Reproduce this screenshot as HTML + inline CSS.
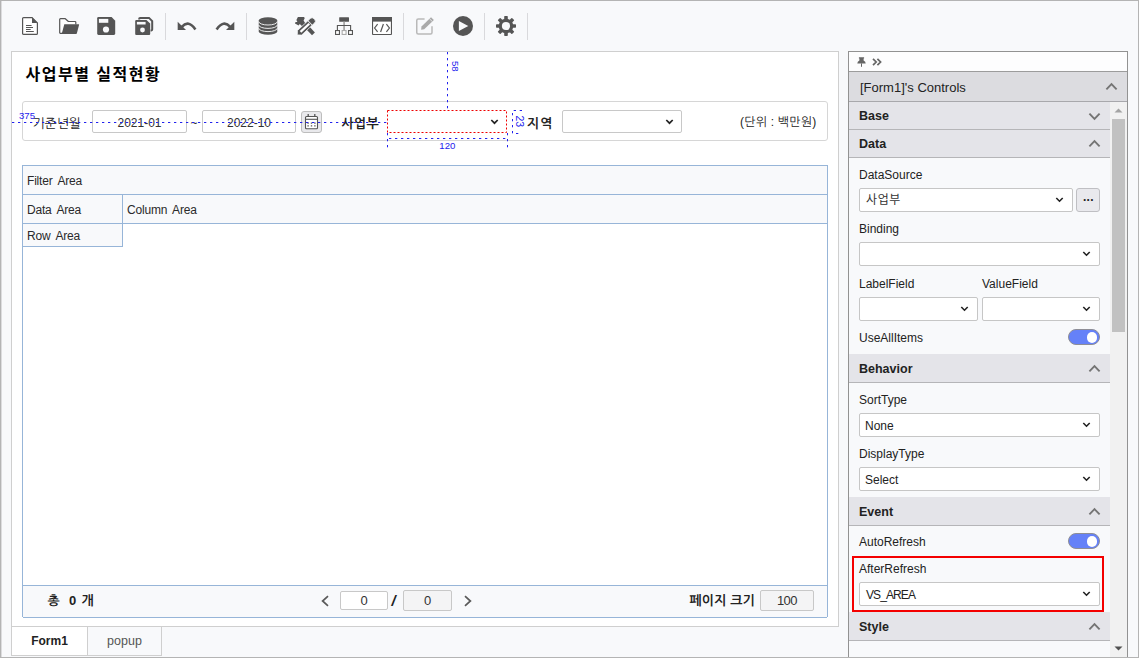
<!DOCTYPE html>
<html lang="ko">
<head>
<meta charset="utf-8">
<title>Form Designer</title>
<style>
*{box-sizing:border-box;margin:0;padding:0}
html,body{width:1139px;height:658px;overflow:hidden;background:#f8f9fb}
body{position:relative;font-family:"Liberation Sans","NanumGothic",sans-serif;font-size:12px;color:#222}
.abs{position:absolute}
#frame{position:absolute;left:0;top:0;width:1139px;height:658px;border:1px solid #b4b4b4;box-shadow:inset 1px 0 0 #dcdcde;pointer-events:none;z-index:50}
/* toolbar */
.tsep{position:absolute;top:13px;width:1px;height:27px;background:#d9d9dc}
.ico{position:absolute}
/* main panel */
#main{position:absolute;left:11px;top:51px;width:828px;height:576px;background:#fff;border:1px solid #cfcfcf}
#title{position:absolute;left:25.500px;top:62.500px;font-family:"Liberation Sans","Noto Sans CJK KR",sans-serif;font-weight:bold;font-size:16px;line-height:24px;color:#000;letter-spacing:1.500px;white-space:nowrap}
#fbox{position:absolute;left:22px;top:101px;width:806px;height:40px;border:1px solid #d6d6d6;border-radius:3px;background:#fff}
.klabel{position:absolute;font-weight:bold;font-size:13px;line-height:15px;color:#222;white-space:nowrap;font-family:"Liberation Sans","NanumGothic",sans-serif}
.inp{position:absolute;height:23px;border:1px solid #c8c8c8;border-radius:2px;background:#fff;text-align:center;font-size:12px;line-height:24px;color:#333}
.chev{position:absolute}
.blue{color:#2a2ae8;font-size:9px;position:absolute;white-space:nowrap;font-family:"Liberation Sans",sans-serif}
/* grid */
#grid{position:absolute;left:22px;top:165px;width:806px;height:452px;border:1px solid #97b5d8;background:#fff}
.gtxt{position:absolute;font-size:12px;color:#2a2a2a;white-space:nowrap;line-height:14px;letter-spacing:-0.200px;word-spacing:2.500px}
.garea{position:absolute;background:#f8f9fb;font-size:12px;color:#222;white-space:nowrap;font-family:"DejaVu Sans","Liberation Sans",sans-serif}
/* tabs */
.tab{position:absolute;top:626px;height:30px;border:1px solid #cfcfcf;font-size:12px;line-height:29px;text-align:center;white-space:nowrap}
/* right panel */
#rp{position:absolute;left:848px;top:51px;width:280px;height:607px;border:1px solid #929292;border-bottom:none;background:#f8f9fb}
.hdr{position:absolute;left:849px;background:#e4e4e9;border-bottom:1px solid #b5b5b8;font-size:13px;white-space:nowrap;color:#222}
.sec{font-weight:bold;font-size:12.500px}
.plabel{position:absolute;left:859px;font-size:12px;color:#222;white-space:nowrap}
.sel{position:absolute;height:24px;border:1px solid #c6c6c6;border-radius:2px;background:#fff;font-size:12px;line-height:24px;padding-left:5px;color:#222;white-space:nowrap;overflow:hidden}
.tog{position:absolute;left:1068px;width:32px;height:16px;border-radius:8px;background:#6581f8;border:1px solid #8e8e96}
.tog i{position:absolute;right:2px;top:2px;width:10.500px;height:10.500px;border-radius:6px;background:#fff}
</style>
</head>
<body>
<div id="frame"></div>

<!-- toolbar separators -->
<div class="tsep" style="left:165px"></div>
<div class="tsep" style="left:246px"></div>
<div class="tsep" style="left:403px"></div>
<div class="tsep" style="left:484px"></div>
<div class="tsep" style="left:527px"></div>

<!-- toolbar icons -->
<!-- new file -->
<svg class="ico" style="left:22px;top:17px" width="16" height="18" viewBox="0 0 16 18">
 <path d="M1.900 0.600 H10 L15.400 6 V16.400 Q15.400 17.400 14.400 17.400 H1.600 Q0.600 17.400 0.600 16.400 V1.600 Q0.600 0.600 1.600 0.600 Z" fill="#fff" stroke="#555" stroke-width="1.200"/>
 <path d="M10 0.300 L15.700 6 H10 Z" fill="#555"/>
 <path d="M4 8.500 H9.600 M4 10.500 H11 M4 12.500 H8.700 M4 14.500 H11.800" stroke="#555" stroke-width="1" fill="none"/>
</svg>
<!-- folder open -->
<svg class="ico" style="left:59px;top:18px" width="21" height="16" viewBox="0 0 21 16">
 <path d="M0.700 15.300 V1.500 Q0.700 0.700 1.500 0.700 H6.300 L9.400 3.500 H16 Q16.800 3.500 16.800 4.300 V6.500 M0.700 15.300 H4" fill="#fff" stroke="#555" stroke-width="1.200" stroke-linejoin="round"/>
 <path d="M5.300 6.200 H19.700 Q20.300 6.200 20.100 6.800 L17.900 15.300 Q17.700 15.900 17.100 15.900 H2.700 Z" fill="#555"/>
</svg>
<!-- save -->
<svg class="ico" style="left:97px;top:17px" width="19" height="18" viewBox="0 0 19 18">
 <path d="M1.500 0 H14.600 L18.200 3.800 V16.600 Q18.200 17.900 16.900 17.900 H1.500 Q0.200 17.900 0.200 16.600 V1.300 Q0.200 0 1.500 0 Z" fill="#555"/>
 <rect x="1.900" y="1.900" width="9.400" height="3.900" fill="#f8f9fb"/>
 <circle cx="9" cy="12.500" r="3.100" fill="#f8f9fb"/>
</svg>
<!-- save all -->
<svg class="ico" style="left:135px;top:16px" width="19" height="20" viewBox="0 0 19 20">
 <path d="M4.200 3.600 V2.800 Q4.200 1.900 5.100 1.900 H14 L17.200 5.100 V13.600 Q17.200 14.400 16.400 14.400 H15.600" fill="none" stroke="#555" stroke-width="2"/>
 <path d="M1.300 4 H11.400 L15.200 7.600 V17.900 Q15.200 19 14.100 19 H1.300 Q0.200 19 0.200 17.900 V5.100 Q0.200 4 1.300 4 Z" fill="#555"/>
 <rect x="1.900" y="5.900" width="8.700" height="2.600" fill="#f8f9fb"/>
 <circle cx="7.500" cy="14" r="2.400" fill="#f8f9fb"/>
</svg>
<!-- undo -->
<svg class="ico" style="left:177px;top:20px" width="20" height="11" viewBox="0 0 20 11">
 <path d="M4.800 6.800 Q11.400 -0.600 18.400 9.400" fill="none" stroke="#555" stroke-width="2.600"/>
 <path d="M0.700 1.700 L0.700 10 L9 10 Z" fill="#555"/>
</svg>
<!-- redo -->
<svg class="ico" style="left:215px;top:20px" width="20" height="11" viewBox="0 0 20 11">
 <path d="M15.200 6.800 Q8.600 -0.600 1.600 9.400" fill="none" stroke="#555" stroke-width="2.600"/>
 <path d="M19.300 1.700 L19.300 10 L11 10 Z" fill="#555"/>
</svg>
<!-- database -->
<svg class="ico" style="left:258px;top:17px" width="20" height="18" viewBox="0 0 20 18">
 <path d="M0.750 3.600 A9.250 3.400 0 0 1 19.250 3.600 V14.400 A9.250 3.400 0 0 1 0.750 14.400 Z" fill="#555"/>
 <path d="M0.750 4.600 A9.250 3.400 0 0 0 19.250 4.600 M0.750 8 A9.250 3.400 0 0 0 19.250 8 M0.750 11.200 A9.250 3.400 0 0 0 19.250 11.200" fill="none" stroke="#f8f9fb" stroke-width="0.900"/>
</svg>
<!-- tools -->
<svg class="ico" style="left:295px;top:17px" width="21" height="19" viewBox="0 0 21 19">
 <path d="M3 -0.200 H9 L9.700 1.200 L8.600 3.600 L10.400 6.600 L7.400 9.400 L4.800 7 L3.600 8.600 L-0.100 6.400 L0.600 5.100 L2.400 4.900 L1.400 3 Z" fill="#555"/>
 <path d="M10 11 L13 8 L19.900 15.400 L17 18.300 Z" fill="#555"/>
 <g transform="translate(2.300 17.900) rotate(-43)">
  <path d="M0 0 L3.100 -3.100 H20.600 Q23.200 -3.100 23.200 -0.600 V0.600 Q23.200 3.100 20.600 3.100 H3.100 Z" fill="#555" stroke="#f8f9fb" stroke-width="0.700"/>
  <rect x="4.400" y="-1.100" width="12" height="2.200" fill="#fff"/>
  <rect x="17" y="-3.400" width="0.900" height="6.800" fill="#f8f9fb"/>
 </g>
</svg>
<!-- sitemap -->
<svg class="ico" style="left:335px;top:17px" width="19" height="19" viewBox="0 0 19 19">
 <rect x="4.200" y="0.200" width="9.800" height="4.500" rx="0.500" fill="#555"/>
 <path d="M9.100 4.700 V13" stroke="#aaa" stroke-width="1.800" fill="none"/>
 <path d="M2.400 13 V8.450 H15.600 V13" fill="none" stroke="#555" stroke-width="1.100"/>
 <rect x="0.550" y="13.550" width="3.900" height="3.900" fill="#fff" stroke="#555" stroke-width="1.100"/>
 <rect x="7.150" y="13.550" width="3.900" height="3.900" fill="#fff" stroke="#aaa" stroke-width="1.100"/>
 <rect x="13.550" y="13.550" width="3.900" height="3.900" fill="#fff" stroke="#555" stroke-width="1.100"/>
</svg>
<!-- code window -->
<svg class="ico" style="left:372px;top:17px" width="20" height="18" viewBox="0 0 20 18">
 <rect x="0.550" y="0.550" width="18.900" height="16.900" rx="0.400" fill="#fff" stroke="#555" stroke-width="1.100"/>
 <rect x="0" y="0" width="20" height="4.600" fill="#555"/>
 <path d="M5.600 7.200 L2.600 11 L5.600 14.800 M14.400 7.200 L17.400 11 L14.400 14.800 M11.400 7 L8.600 15" fill="none" stroke="#555" stroke-width="1.200"/>
</svg>
<!-- edit (disabled) -->
<svg class="ico" style="left:416px;top:17px" width="19" height="19" viewBox="0 0 19 19">
 <path d="M8.600 2 H2.300 Q0.750 2 0.750 3.500 V15.500 Q0.750 17 2.300 17 H14.500 Q16 17 16 15.500 V9.200" fill="none" stroke="#b9b9b9" stroke-width="1.500"/>
 <path d="M5.100 12.700 L5.500 9.600 L15 0.200 L17.900 3 L8.200 12.300 Z" fill="#aaa"/>
 <path d="M13.400 1.700 L16.300 4.500" stroke="#f8f9fb" stroke-width="0.700"/>
</svg>
<!-- play -->
<svg class="ico" style="left:453px;top:16px" width="20" height="20" viewBox="0 0 20 20">
 <circle cx="10" cy="10" r="10" fill="#555"/>
 <path d="M5.850 4.900 L15.300 10 L5.850 15.100 Z" fill="#f8f9fb"/>
</svg>
<!-- gear -->
<svg class="ico" style="left:496px;top:16px" width="20" height="20" viewBox="-10 -10 20 20">
 <g fill="#555">
  <circle r="7.300"/>
  <rect x="-1.800" y="-10" width="3.600" height="20" rx="0.700"/>
  <rect x="-1.800" y="-10" width="3.600" height="20" rx="0.700" transform="rotate(45)"/>
  <rect x="-1.800" y="-10" width="3.600" height="20" rx="0.700" transform="rotate(90)"/>
  <rect x="-1.800" y="-10" width="3.600" height="20" rx="0.700" transform="rotate(135)"/>
 </g>
 <circle r="4.100" fill="#f8f9fb"/>
</svg>

<!-- main -->
<div id="main"></div>
<div id="title">사업부별 실적현황</div>
<div id="fbox"></div>

<div class="klabel" style="left:32.500px;top:115.500px;font-weight:normal;letter-spacing:-0.100px">기준년월</div>
<div class="inp" style="left:92px;top:110px;width:95px">2021-01</div>
<div class="abs" style="left:190.500px;top:115.500px;font-size:12px;color:#333">~</div>
<div class="inp" style="left:202px;top:110px;width:94px">2022-10</div>
<!-- calendar button -->
<div class="abs" style="left:301px;top:111px;width:21px;height:22px;border:1px solid #bdbdbd;border-radius:3px;background:#e9e9ec"></div>
<svg class="ico" style="left:304px;top:113px" width="15" height="17" viewBox="0 0 15 17">
 <rect x="1.500" y="3.500" width="12" height="12.200" rx="1" fill="#fff" stroke="#555" stroke-width="1.100"/>
 <path d="M1.500 6.300 H13.500" stroke="#555" stroke-width="1.100"/>
 <path d="M4.200 1 V4 M10.800 1 V4" stroke="#555" stroke-width="1.300"/>
 <path d="M3.400 10.100 H4.800 M6.800 10.100 H8.200 M10.200 10.100 H11.600 M3.400 12.900 H4.800 M6.800 12.900 H8.200 M10.200 12.900 H11.600" stroke="#555" stroke-width="1.300"/>
</svg>
<div class="klabel" style="left:341.500px;top:115.500px;letter-spacing:0.300px">사업부</div>
<!-- red dashed select -->

<svg class="chev" style="left:490px;top:119px" width="9" height="6" viewBox="0 0 9 6"><path d="M1.3 1 L4.5 4.2 L7.7 1" fill="none" stroke="#222" stroke-width="1.7"/></svg>
<div class="klabel" style="left:527px;top:115.500px;letter-spacing:1px">지역</div>
<div class="inp" style="left:562px;top:110px;width:120px;height:23px"></div>
<svg class="chev" style="left:665px;top:119px" width="9" height="6" viewBox="0 0 9 6"><path d="M1.3 1 L4.5 4.2 L7.7 1" fill="none" stroke="#222" stroke-width="1.7"/></svg>
<div class="abs" style="left:740px;top:115px;font-size:12px;color:#222;white-space:nowrap;letter-spacing:0.2px">(단위 : 백만원)</div>

<!-- blue guides -->
<svg class="abs" style="left:0;top:0;z-index:20" width="840" height="200" viewBox="0 0 840 200">
 <rect x="387.500" y="110.500" width="119" height="22" fill="none" stroke="#ee0000" stroke-width="1" stroke-dasharray="2 2"/>
 <g fill="none" stroke="#2222ee" stroke-width="1" stroke-dasharray="2.300 3.700">
  <path d="M12 122.500 H387"/>
  <path d="M447.500 52 V110"/>
  <path d="M387.500 133 V150 M507.500 133 V150"/>
  <path d="M389 138.500 H507"/>
  <path d="M522 110.500 H512.500 V133.500 H522"/>
 </g>
 <g fill="#2222ee" font-family="Liberation Sans, sans-serif" font-size="9.600">
  <text x="19" y="119.300">375</text>
  <text x="439.300" y="148.700">120</text>
  <text transform="translate(451.700 61) rotate(90)">58</text>
  <text transform="translate(515.700 115.500) rotate(90)" font-size="10.500">23</text>
 </g>
</svg>

<div id="grid"></div>
<div class="garea" style="left:23px;top:166px;width:804px;height:29px;border-bottom:1px solid #97b5d8"></div>
<div class="garea" style="left:23px;top:195px;width:804px;height:29px;border-bottom:1px solid #97b5d8"></div>
<div class="garea" style="left:23px;top:224px;width:100px;height:23px;border-bottom:1px solid #97b5d8;border-right:1px solid #97b5d8"></div>
<div class="abs" style="left:122px;top:195px;width:1px;height:52px;background:#97b5d8"></div>
<div class="gtxt" style="left:27px;top:174px">Filter Area</div>
<div class="gtxt" style="left:27px;top:203px">Data Area</div>
<div class="gtxt" style="left:127px;top:203px">Column Area</div>
<div class="gtxt" style="left:27px;top:229px">Row Area</div>
<!-- grid footer -->
<div class="garea" style="left:23px;top:585px;width:804px;height:33px;border-top:1px solid #97b5d8;border-bottom:1px solid #97b5d8"></div>
<div class="klabel" style="left:47.500px;top:593px">총</div><div class="klabel" style="left:69px;top:593px;font-size:13px">0</div><div class="klabel" style="left:81.500px;top:593px">개</div>
<svg class="chev" style="left:320px;top:594.500px" width="10" height="12" viewBox="0 0 10 12"><path d="M8 1.200 L2.600 6 L8 10.800" fill="none" stroke="#5a5a5a" stroke-width="1.700"/></svg>
<div class="inp" style="left:340px;top:591px;width:48px;height:19px;line-height:18px;border-radius:2px;font-size:13px">0</div>
<div class="abs" style="left:391.500px;top:592px;font-size:15px;line-height:17px;font-weight:bold;font-style:italic;color:#222">/</div>
<div class="inp" style="left:403px;top:590px;width:49px;height:21px;line-height:20px;background:#f4f4f5;border-radius:2px;font-size:13px">0</div>
<svg class="chev" style="left:462.500px;top:594.500px" width="10" height="12" viewBox="0 0 10 12"><path d="M2 1.200 L7.400 6 L2 10.800" fill="none" stroke="#5a5a5a" stroke-width="1.700"/></svg>
<div class="klabel" style="left:689.500px;top:593px;letter-spacing:0.150px">페이지 크기</div>
<div class="inp" style="left:760px;top:590px;width:54px;height:21px;line-height:19px;background:#f4f4f5;border-radius:2px;font-size:13px;letter-spacing:-0.500px">100</div>

<!-- tabs -->
<div class="tab" style="left:11px;width:77px;background:#fff;font-weight:bold;color:#222">Form1</div>
<div class="tab" style="left:87px;width:75px;background:#f8f9fb;color:#555;font-size:12.500px">popup</div>

<!-- right panel -->
<div id="rp"></div>
<div class="abs" style="left:849px;top:52px;width:278px;height:19px;background:#fdfdfe;border-bottom:1px solid #9c9c9c;height:20px"></div>
<!-- pin -->
<svg class="ico" style="left:857px;top:57px" width="9" height="10" viewBox="0 0 9 10">
 <path d="M1.900 0.300 H7.100 V1.600 H6.600 V3.600 Q8.700 4.800 8.700 6.600 H0.300 Q0.300 4.800 2.400 3.600 V1.600 H1.900 Z" fill="#666"/>
 <path d="M4.5 6.4 V9.8" stroke="#666" stroke-width="1"/>
</svg>
<svg class="ico" style="left:872px;top:58px" width="10" height="8" viewBox="0 0 10 8">
 <path d="M1 0.800 L4.200 4 L1 7.200 M5.400 0.800 L8.600 4 L5.400 7.200" fill="none" stroke="#666" stroke-width="1.700"/>
</svg>
<div class="hdr" style="top:72px;width:278px;height:30px;background:#dcdce0;border-bottom:1px solid #a8a8ac;line-height:31px;padding-left:11px">[Form1]'s Controls</div>
<svg class="chev" style="left:1105px;top:82px" width="13" height="9" viewBox="0 0 13 9"><path d="M1.400 7.400 L6.500 2.200 L11.600 7.400" fill="none" stroke="#747474" stroke-width="1.900"/></svg>

<!-- scrollbar -->
<div class="abs" style="left:1110px;top:102px;width:17px;height:556px;background:#f1f1f1"></div>
<div class="abs" style="left:1112px;top:119px;width:13px;height:213px;background:#c1c1c1"></div>
<svg class="abs" style="left:1114px;top:108px" width="9" height="5" viewBox="0 0 9 5"><path d="M0.5 4.5 L4.5 0.5 L8.5 4.5 Z" fill="#a3a3a3"/></svg>
<svg class="abs" style="left:1114px;top:646px" width="9" height="5" viewBox="0 0 9 5"><path d="M0.5 0.5 L4.5 4.5 L8.5 0.5 Z" fill="#505050"/></svg>

<!-- sections -->
<div class="hdr sec" style="top:102px;width:261px;height:28px;line-height:29px;padding-left:10px">Base</div>
<svg class="chev" style="left:1088px;top:112px" width="13" height="9" viewBox="0 0 13 9"><path d="M1.400 1.600 L6.500 6.800 L11.600 1.600" fill="none" stroke="#747474" stroke-width="1.900"/></svg>
<div class="hdr sec" style="top:130px;width:261px;height:28px;line-height:29px;padding-left:10px">Data</div>
<svg class="chev" style="left:1088px;top:139px" width="13" height="9" viewBox="0 0 13 9"><path d="M1.400 7.400 L6.500 2.200 L11.600 7.400" fill="none" stroke="#747474" stroke-width="1.900"/></svg>

<div class="plabel" style="top:168px">DataSource</div>
<div class="sel" style="left:859px;top:188px;width:214px;font-family:'Liberation Sans','Noto Sans CJK KR',sans-serif;letter-spacing:0.6px;color:#333;line-height:22px;padding-left:6px">사업부</div>
<svg class="chev" style="left:1055px;top:197px" width="9" height="6" viewBox="0 0 9 6"><path d="M1.3 1 L4.5 4.2 L7.7 1" fill="none" stroke="#222" stroke-width="1.6"/></svg>
<div class="abs" style="left:1076px;top:188px;width:24px;height:24px;border:1px solid #bfbfc3;border-radius:3px;background:#e9e9ed;text-align:center;font-weight:bold;font-size:12px;line-height:16px;color:#222;letter-spacing:0.4px;padding-left:1px">...</div>

<div class="plabel" style="top:221.500px">Binding</div>
<div class="sel" style="left:859px;top:242px;width:241px"></div>
<svg class="chev" style="left:1082px;top:251px" width="9" height="6" viewBox="0 0 9 6"><path d="M1.3 1 L4.5 4.2 L7.7 1" fill="none" stroke="#222" stroke-width="1.6"/></svg>

<div class="plabel" style="top:277px">LabelField</div>
<div class="plabel" style="top:277px;left:982px">ValueField</div>
<div class="sel" style="left:859px;top:297px;width:119px"></div>
<svg class="chev" style="left:960px;top:306px" width="9" height="6" viewBox="0 0 9 6"><path d="M1.3 1 L4.5 4.2 L7.7 1" fill="none" stroke="#222" stroke-width="1.6"/></svg>
<div class="sel" style="left:982px;top:297px;width:118px"></div>
<svg class="chev" style="left:1082px;top:306px" width="9" height="6" viewBox="0 0 9 6"><path d="M1.3 1 L4.5 4.2 L7.7 1" fill="none" stroke="#222" stroke-width="1.6"/></svg>

<div class="plabel" style="top:331px">UseAllItems</div>
<div class="tog" style="top:329px"><i></i></div>

<div class="hdr sec" style="top:354px;width:261px;height:29px;line-height:31px;padding-left:10px">Behavior</div>
<svg class="chev" style="left:1088px;top:364px" width="13" height="9" viewBox="0 0 13 9"><path d="M1.400 7.400 L6.500 2.200 L11.600 7.400" fill="none" stroke="#747474" stroke-width="1.900"/></svg>

<div class="plabel" style="top:393px">SortType</div>
<div class="sel" style="left:859px;top:413px;width:241px">None</div>
<svg class="chev" style="left:1082px;top:422px" width="9" height="6" viewBox="0 0 9 6"><path d="M1.3 1 L4.5 4.2 L7.7 1" fill="none" stroke="#222" stroke-width="1.6"/></svg>

<div class="plabel" style="top:447px">DisplayType</div>
<div class="sel" style="left:859px;top:467px;width:241px">Select</div>
<svg class="chev" style="left:1082px;top:476px" width="9" height="6" viewBox="0 0 9 6"><path d="M1.3 1 L4.5 4.2 L7.7 1" fill="none" stroke="#222" stroke-width="1.6"/></svg>

<div class="hdr sec" style="top:497px;width:261px;height:29px;line-height:31px;padding-left:10px">Event</div>
<svg class="chev" style="left:1088px;top:507px" width="13" height="9" viewBox="0 0 13 9"><path d="M1.400 7.400 L6.500 2.200 L11.600 7.400" fill="none" stroke="#747474" stroke-width="1.900"/></svg>

<div class="plabel" style="top:535px">AutoRefresh</div>
<div class="tog" style="top:533px"><i></i></div>

<div class="abs" style="left:852px;top:556px;width:252px;height:56px;border:2px solid #f40000"></div>
<div class="plabel" style="top:562px">AfterRefresh</div>
<div class="sel" style="left:859px;top:582px;width:241px;letter-spacing:-0.900px;padding-left:6px">VS_AREA</div>
<svg class="chev" style="left:1082px;top:591px" width="9" height="6" viewBox="0 0 9 6"><path d="M1.3 1 L4.5 4.2 L7.7 1" fill="none" stroke="#222" stroke-width="1.6"/></svg>

<div class="hdr sec" style="top:612px;width:261px;height:29px;line-height:31px;padding-left:10px">Style</div>
<svg class="chev" style="left:1088px;top:622px" width="13" height="9" viewBox="0 0 13 9"><path d="M1.400 7.400 L6.500 2.200 L11.600 7.400" fill="none" stroke="#747474" stroke-width="1.900"/></svg>
</body>
</html>
